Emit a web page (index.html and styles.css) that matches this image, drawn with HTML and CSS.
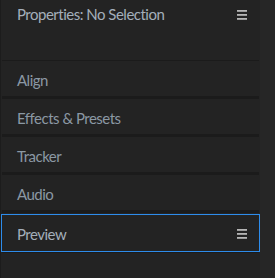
FILE: index.html
```html
<!DOCTYPE html>
<html lang="en">
<head>
    <meta charset="UTF-8">
    <title>Panels</title>
    <link rel="stylesheet" href="styles.css">
</head>
<body>

<div class="dock">
    <div class="panel">
        <div class="panel-header">
            <span class="title">Properties: No Selection</span>
            <span class="menu-icon"><i></i><i></i><i></i></span>
        </div>
        <div class="rule"></div>
        <div class="tab">Align</div>
        <div class="divider"></div>
        <div class="tab">Effects &amp; Presets</div>
        <div class="divider"></div>
        <div class="tab">Tracker</div>
        <div class="divider"></div>
        <div class="tab">Audio</div>
        <div class="divider"></div>
        <div class="spacer"></div>
        <div class="tab active">
            <span>Preview</span>
            <span class="menu-icon"><i></i><i></i><i></i></span>
        </div>
        <div class="rule"></div>
    </div>
</div>

</body>
</html>
```

FILE: styles.css
```css
* {
    box-sizing: border-box;
    margin: 0;
    padding: 0;
}
body {
    background-color: #262626;
    font-family: Lato, sans-serif;
    height: 278px;
    overflow: hidden;
}
.dock {
    height: 278px;
    width: 260px;
    background-color: #232323;
    border-left: 1px solid #1c1c1c;
}
.panel {
    width: 259px;
}
.panel-header {
    height: 60px;
    display: flex;
    justify-content: space-between;
    align-items: flex-start;
    padding: 5px 13px 0 16px;
}
.title {
    font-size: 15px;
    letter-spacing: -0.5px;
    color: #a3afbb;
}
.menu-icon {
    display: flex;
    flex-direction: column;
    gap: 2px;
    width: 10px;
    margin-top: 5px;
}
.menu-icon i {
    display: block;
    height: 2px;
    background: linear-gradient(#c4c4c4, #8a8a8a);
}
.rule {
    height: 1px;
    margin: 0 1px;
    background-color: #1b1b1b;
}
.divider {
    height: 3px;
    margin: 0 1px;
    background-color: #1b1b1b;
}
.spacer {
    height: 1px;
}
.tab {
    height: 35px;
    display: flex;
    align-items: center;
    padding: 2px 0 0 16px;
    font-size: 15px;
    letter-spacing: -0.5px;
    color: #8b98a4;
}
.tab.active {
    height: 38px;
    border: 1px solid #2d8ceb;
    justify-content: space-between;
    padding: 1px 12px 0 15px;
    color: #a3afbb;
}
.tab.active .menu-icon {
    margin-top: 0;
}
```
